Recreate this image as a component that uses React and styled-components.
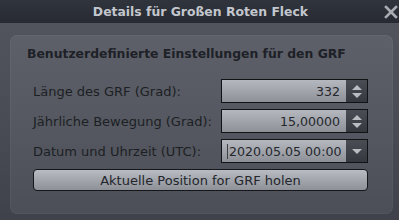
import React from "react";
import styled, { createGlobalStyle } from "styled-components";

const GlobalStyle = createGlobalStyle`
  html, body {
    margin: 0;
    padding: 0;
    background: #41444c;
  }
  body {
    font-family: "DejaVu Sans", Verdana, sans-serif;
  }
`;

const Window = styled.div`
  width: 399px;
  height: 220px;
  display: flex;
  flex-direction: column;
  background: linear-gradient(180deg, #53565e 0%, #484b53 60%, #3f424a 100%);
  overflow: hidden;
`;

const TitleBar = styled.div`
  height: 23px;
  flex: none;
  display: flex;
  align-items: center;
  justify-content: center;
  position: relative;
  background: linear-gradient(180deg, #30343d 0%, #272a32 100%);
`;

const Title = styled.div`
  font-size: 12.4px;
  font-weight: bold;
  color: #c3c7cd;
  margin-left: 2px;
`;

const Close = styled.div`
  position: absolute;
  right: 1px;
  top: 4px;
  width: 14px;
  height: 14px;
`;

const Body = styled.div`
  flex: 1;
  padding: 12px 6px 6px 10px;
  display: flex;
`;

const Group = styled.div`
  flex: 1;
  border-radius: 7px;
  background: linear-gradient(180deg, #5d6068 0%, #555860 50%, #4c4f57 100%);
  box-shadow: inset 0 0 0 1px rgba(255, 255, 255, 0.04);
  padding: 11px 0 0 17px;
  display: flex;
  flex-direction: column;
`;

const Heading = styled.div`
  font-size: 12.4px;
  font-weight: bold;
  color: #1e2127;
  height: 16px;
  line-height: 16px;
`;

const Rows = styled.div`
  margin-top: 17px;
  margin-left: 6px;
  width: 335px;
  display: flex;
  flex-direction: column;
  gap: 6px;
`;

const Row = styled.div`
  display: flex;
  align-items: center;
  justify-content: space-between;
  height: 24px;
`;

const Label = styled.div`
  font-size: 13px;
  color: #1c1f24;
`;

const Field = styled.div`
  width: 147px;
  height: 24px;
  box-sizing: border-box;
  border: 1px solid #111317;
  display: flex;
`;

const Value = styled.div`
  flex: 1;
  display: flex;
  align-items: center;
  justify-content: ${(p) => (p.$left ? "flex-start" : "flex-end")};
  padding: ${(p) => (p.$left ? "0 0 0 5px" : "0 6px 0 0")};
  font-size: 12.6px;
  color: #24272d;
  background: linear-gradient(180deg, #b5b8bf 0%, #a1a4ab 50%, #8d9097 100%);
`;

const Caret = styled.span`
  width: 1px;
  height: 15px;
  background: #3a3d42;
  margin-right: 1px;
`;

const Spin = styled.div`
  width: 21px;
  display: flex;
  flex-direction: column;
  align-items: center;
  justify-content: center;
  gap: 3px;
  background: linear-gradient(180deg, #4a4d53 0%, #35383e 100%);
`;

const Arrow = styled.div`
  width: 0;
  height: 0;
  border-left: 5px solid transparent;
  border-right: 5px solid transparent;
  ${(p) =>
    p.$up
      ? "border-bottom: 5px solid #b9bdc2;"
      : "border-top: 5px solid #b9bdc2;"}
`;

const Button = styled.div`
  height: 22px;
  box-sizing: border-box;
  border: 1px solid #15171b;
  border-radius: 4px;
  background: linear-gradient(180deg, #b9bcc3 0%, #a2a5ac 50%, #8e9198 100%);
  display: flex;
  align-items: center;
  justify-content: center;
  font-size: 13px;
  color: #23262c;
`;

function CloseIcon() {
  return (
    <svg width="14" height="14" viewBox="0 0 14 14">
      <path d="M2 2 L12 12 M12 2 L2 12" stroke="#a9adb3" strokeWidth="2.6" strokeLinecap="square" />
    </svg>
  );
}

export default function App() {
  return (
    <Window>
      <GlobalStyle />
      <TitleBar>
        <Title>Details für Großen Roten Fleck</Title>
        <Close>
          <CloseIcon />
        </Close>
      </TitleBar>
      <Body>
        <Group>
          <Heading>Benutzerdefinierte Einstellungen für den GRF</Heading>
          <Rows>
            <Row>
              <Label>Länge des GRF (Grad):</Label>
              <Field>
                <Value>332</Value>
                <Spin>
                  <Arrow $up />
                  <Arrow />
                </Spin>
              </Field>
            </Row>
            <Row>
              <Label>Jährliche Bewegung (Grad):</Label>
              <Field>
                <Value>15,00000</Value>
                <Spin>
                  <Arrow $up />
                  <Arrow />
                </Spin>
              </Field>
            </Row>
            <Row>
              <Label>Datum und Uhrzeit (UTC):</Label>
              <Field>
                <Value $left>
                  <Caret />
                  2020.05.05 00:00
                </Value>
                <Spin>
                  <Arrow />
                </Spin>
              </Field>
            </Row>
            <Button>Aktuelle Position for GRF holen</Button>
          </Rows>
        </Group>
      </Body>
    </Window>
  );
}
